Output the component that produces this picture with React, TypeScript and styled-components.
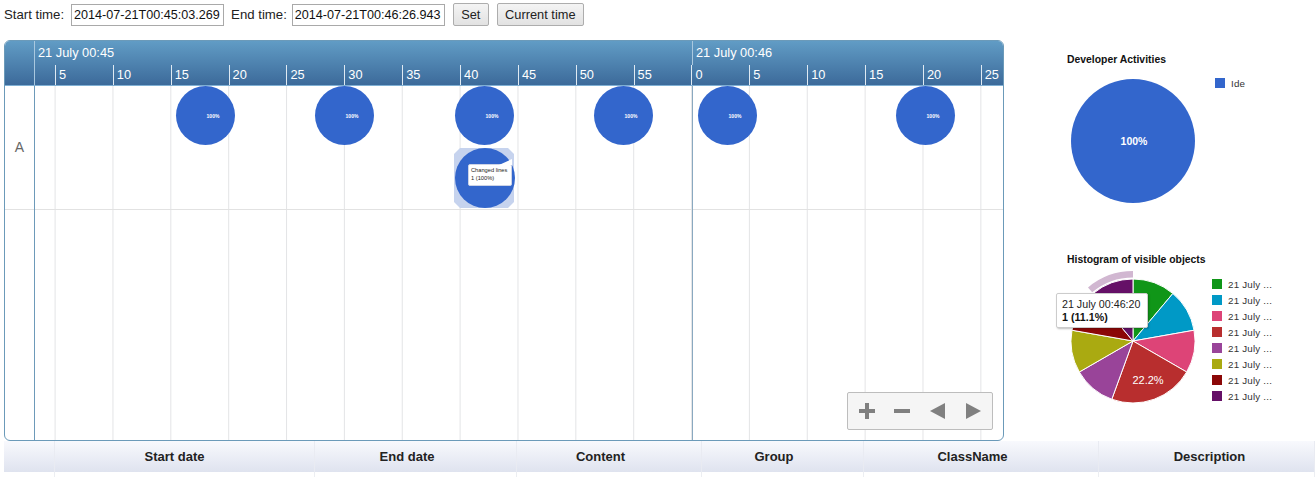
import React from "react";
import styled, { createGlobalStyle } from "styled-components";

const Global = createGlobalStyle`
  html, body { margin: 0; padding: 0; height: 477px; overflow: hidden; background: #fff; }
  body { font-family: "Liberation Sans", Arial, sans-serif; color: #111; }
`;

const Page = styled.div`
  width: 1315px;
  height: 477px;
  overflow: hidden;
`;

const Toolbar = styled.div`
  display: flex;
  align-items: flex-start;
  height: 40px;
  padding: 3px 0 0 4px;
  box-sizing: border-box;
  font-size: 13.2px;
`;
const FieldLabel = styled.label<{ $gap: number }>`
  line-height: 23px;
  margin-right: ${(p) => p.$gap}px;
  color: #222;
`;
const TimeInput = styled.input`
  width: 153px;
  height: 22px;
  margin: 1px 7px 0 0;
  padding: 0 0 0 2px;
  box-sizing: border-box;
  border: 1px solid #a9a9a9;
  font: 12.6px "Liberation Sans", Arial, sans-serif;
  color: #111;
`;
const ButtonGroup = styled.div`
  display: flex;
  gap: 8px;
  margin-left: 1px;
`;
const Button = styled.button<{ $w: number }>`
  width: ${(p) => p.$w}px;
  height: 23px;
  padding: 0;
  border: 1px solid #adadad;
  border-radius: 2px;
  background: linear-gradient(#f4f4f4, #e2e2e2);
  font: 12.8px "Liberation Sans", Arial, sans-serif;
  color: #222;
`;

const Main = styled.div`
  display: flex;
  height: 401px;
  padding-left: 4px;
`;

const Timeline = styled.div`
  width: 1000px;
  height: 401px;
  box-sizing: border-box;
  border: 1px solid #6b9ab9;
  border-radius: 6px;
  overflow: hidden;
  display: grid;
  grid-template-rows: 45px 1fr;
`;
const TimeHeader = styled.div`
  display: flex;
  flex-direction: column;
  background: linear-gradient(#619cc5, #3c6a9a);
  border-bottom: 1px solid #7fb0d4;
  box-sizing: border-box;
  color: #fff;
  font-size: 12.8px;
`;
const MajorRow = styled.div`
  display: flex;
  height: 25px;
  padding-left: 29px;
`;
const MajorCell = styled.div<{ $w: number }>`
  width: ${(p) => p.$w}px;
  flex: none;
  box-sizing: border-box;
  border-left: 1px solid #a9c8df;
  padding: 4px 0 0 3px;
`;
const MinorRow = styled.div`
  display: flex;
  height: 20px;
  padding-left: 29px;
`;
const MinorLead = styled.div`
  width: 21px;
  flex: none;
  border-left: 1px solid #a9c8df;
  box-sizing: border-box;
`;
const Tick = styled.div`
  width: 57.87px;
  flex: none;
  box-sizing: border-box;
  border-left: 1px solid #dfeaf3;
  padding: 2px 0 0 3px;
`;

const TimeBody = styled.div`
  display: grid;
  grid-template-columns: 30px 1fr;
  min-height: 0;
`;
const GroupColumn = styled.div`
  border-right: 1px solid #6d9ab9;
`;
const GroupLabel = styled.div`
  height: 124px;
  box-sizing: border-box;
  border-bottom: 1px solid #e2e2e2;
  padding-bottom: 2px;
  display: flex;
  align-items: center;
  justify-content: center;
  font-size: 14px;
  color: #666;
`;
const Canvas = styled.div`
  position: relative;
  background-position: 19.6px 0;
  background-size: 57.87px 100%;
  background-image: linear-gradient(to right, #e3e4e6 0, #e3e4e6 1px, transparent 1px);
`;
const RowBand = styled.div`
  height: 124px;
  box-sizing: border-box;
  border-bottom: 1px solid #e2e2e2;
`;
const MajorLine = styled.div`
  position: absolute;
  top: 0;
  bottom: 0;
  left: 657px;
  width: 1px;
  background: #8aa9c0;
`;
const Bubble = styled.div<{ $x: number; $y: number }>`
  position: absolute;
  left: ${(p) => p.$x}px;
  top: ${(p) => p.$y}px;
  width: 59px;
  height: 59px;
  padding-left: 15px;
  box-sizing: border-box;
  border-radius: 50%;
  background: #3366cc;
  color: #fff;
  font-size: 5px;
  font-weight: bold;
  display: flex;
  align-items: center;
  justify-content: center;
`;
const Selection = styled.div`
  position: absolute;
  left: 419px;
  top: 62px;
  width: 60px;
  height: 60px;
  background: #c6d3ee;
  clip-path: polygon(6px 0, 54px 0, 100% 6px, 100% 54px, 54px 100%, 6px 100%, 0 54px, 0 6px);
`;
const SelectedPie = styled.div`
  position: absolute;
  left: 420px;
  top: 62px;
  width: 60px;
  height: 60px;
  border-radius: 50%;
  background: #3366cc;
`;
const MiniTip = styled.div`
  position: absolute;
  left: 433px;
  top: 78px;
  width: 44px;
  height: 22px;
  box-sizing: border-box;
  padding: 2px 0 0 2px;
  background: #fff;
  border: 1px solid #ccd3e6;
  border-radius: 2px;
  font-size: 5.7px;
  line-height: 7.5px;
  color: #222;
  &::after {
    content: "";
    position: absolute;
    right: -1px;
    top: -6px;
    width: 13px;
    height: 6px;
    background: #fff;
    clip-path: polygon(0 100%, 100% 0, 100% 100%);
  }
`;

const Controls = styled.div`
  position: absolute;
  left: 812px;
  top: 306px;
  width: 146px;
  height: 38px;
  box-sizing: border-box;
  border: 1px solid #bdbdbd;
  border-radius: 2px;
  background: #f5f5f5;
  display: flex;
  align-items: center;
  justify-content: space-between;
  padding: 0 10px;
`;
const ControlIcon = styled.svg`
  width: 18px;
  height: 18px;
  fill: #808080;
  display: block;
`;

const Side = styled.div`
  flex: 1;
  display: flex;
  flex-direction: column;
`;
const ChartCard = styled.section`
  position: relative;
  height: 200px;
  padding-left: 63px;
  box-sizing: border-box;
`;
const ChartTitle = styled.h3<{ $top: number }>`
  margin: 0;
  padding-top: ${(p) => p.$top}px;
  height: 32px;
  box-sizing: border-box;
  font-size: 10.4px;
  line-height: 12px;
  font-weight: bold;
  color: #111;
`;
const ChartBody = styled.div`
  display: flex;
  margin-left: -3px;
`;
const PieSvg = styled.svg`
  width: 138px;
  height: 138px;
  flex: none;
  overflow: visible;
  display: block;
`;
const Legend = styled.ul<{ $left: number; $top: number }>`
  list-style: none;
  margin: ${(p) => p.$top}px 0 0 ${(p) => p.$left}px;
  padding: 0;
`;
const LegendRow = styled.li`
  display: flex;
  align-items: center;
  height: 16px;
  font-size: 9.8px;
  letter-spacing: 0.2px;
  color: #333;
`;
const Swatch = styled.span<{ $c: string }>`
  width: 10px;
  height: 10px;
  margin-right: 6px;
  background: ${(p) => p.$c};
`;
const ChartTip = styled.div`
  position: absolute;
  left: 52px;
  top: 53px;
  width: 92px;
  height: 35px;
  box-sizing: border-box;
  padding: 4px 0 0 5px;
  background: #fff;
  border: 1px solid #ccc;
  border-radius: 2px;
  box-shadow: 1px 1px 2px rgba(0, 0, 0, 0.25);
  font-size: 10.7px;
  line-height: 13px;
  color: #222;
  b { color: #111; font-weight: bold; }
`;

const DataTable = styled.div`
  margin-left: 4px;
`;
const TableRow = styled.div<{ $h: number }>`
  display: grid;
  grid-template-columns: 51px 260px 202px 185px 162px 235px 216px;
  height: ${(p) => p.$h}px;
`;
const HeadCell = styled.div<{ $shift: number }>`
  box-sizing: border-box;
  border-right: 1px solid #e9ebf2;
  background: linear-gradient(#f8f9fd, #dfe3ef);
  padding-right: ${(p) => Math.max(p.$shift, 0)}px;
  padding-left: ${(p) => Math.max(-p.$shift, 0)}px;
  display: flex;
  align-items: center;
  justify-content: center;
  font-size: 13px;
  font-weight: bold;
  color: #222;
`;
const BodyCell = styled.div`
  border-right: 1px solid #eceef2;
`;

const slices = [
  { c: "#109618", v: 1 },
  { c: "#0099c6", v: 1 },
  { c: "#dd4477", v: 1 },
  { c: "#b82e2e", v: 2 },
  { c: "#994499", v: 1 },
  { c: "#aaaa11", v: 1 },
  { c: "#8b0707", v: 1 },
  { c: "#651067", v: 1 },
];

const pt = (r: number, deg: number) => {
  const a = (deg * Math.PI) / 180;
  return `${(69 + r * Math.sin(a)).toFixed(2)} ${(69 - r * Math.cos(a)).toFixed(2)}`;
};
const slicePaths = (() => {
  let at = 0;
  return slices.map((s) => {
    const end = at + s.v * 40;
    const d = `M69 69 L${pt(62, at)} A62 62 0 0 1 ${pt(62, end)} Z`;
    at = end;
    return { ...s, d };
  });
})();

const ticks = [5, 10, 15, 20, 25, 30, 35, 40, 45, 50, 55, 0, 5, 10, 15, 20, 25];
const bubbles = [141, 280, 420, 559, 663, 861];
const columns = [
  { t: "", s: 0 },
  { t: "Start date", s: 20 },
  { t: "End date", s: 17 },
  { t: "Content", s: 17 },
  { t: "Group", s: 17 },
  { t: "ClassName", s: 17 },
  { t: "Description", s: -6 },
];

export default function App() {
  return (
    <Page>
      <Global />
      <Toolbar>
        <FieldLabel $gap={7}>Start time:</FieldLabel>
        <TimeInput defaultValue="2014-07-21T00:45:03.269" />
        <FieldLabel $gap={5}>End time:</FieldLabel>
        <TimeInput defaultValue="2014-07-21T00:46:26.943" />
        <ButtonGroup>
          <Button $w={36}>Set</Button>
          <Button $w={87}>Current time</Button>
        </ButtonGroup>
      </Toolbar>
      <Main>
        <Timeline>
          <TimeHeader>
            <MajorRow>
              <MajorCell $w={658}>21 July 00:45</MajorCell>
              <MajorCell $w={311}>21 July 00:46</MajorCell>
            </MajorRow>
            <MinorRow>
              <MinorLead />
              {ticks.map((t, i) => (
                <Tick key={i}>{t}</Tick>
              ))}
            </MinorRow>
          </TimeHeader>
          <TimeBody>
            <GroupColumn>
              <GroupLabel>A</GroupLabel>
            </GroupColumn>
            <Canvas>
              <RowBand />
              <MajorLine />
              {bubbles.map((x) => (
                <Bubble key={x} $x={x} $y={0}>
                  100%
                </Bubble>
              ))}
              <Selection />
              <SelectedPie />
              <MiniTip>
                Changed lines
                <br />1 (100%)
              </MiniTip>
              <Controls>
                <ControlIcon viewBox="0 0 18 18">
                  <path d="M7 1h4v6h6v4h-6v6H7v-6H1V7h6z" />
                </ControlIcon>
                <ControlIcon viewBox="0 0 18 18">
                  <path d="M1 7h16v4H1z" />
                </ControlIcon>
                <ControlIcon viewBox="0 0 18 18">
                  <path d="M1 9l15-8v16z" />
                </ControlIcon>
                <ControlIcon viewBox="0 0 18 18">
                  <path d="M17 9L2 1v16z" />
                </ControlIcon>
              </Controls>
            </Canvas>
          </TimeBody>
        </Timeline>
        <Side>
          <ChartCard>
            <ChartTitle $top={14}>Developer Activities</ChartTitle>
            <ChartBody>
              <PieSvg viewBox="0 0 138 138">
                <circle cx="69" cy="69" r="62" fill="#3366cc" />
                <text x="70" y="73" textAnchor="middle" fontSize="10.5" fontWeight="bold" fill="#fff" fontFamily="Liberation Sans">
                  100%
                </text>
              </PieSvg>
              <Legend $left={13} $top={3}>
                <LegendRow>
                  <Swatch $c="#3366cc" />
                  Ide
                </LegendRow>
              </Legend>
            </ChartBody>
          </ChartCard>
          <ChartCard>
            <ChartTitle $top={14}>Histogram of visible objects</ChartTitle>
            <ChartBody>
              <PieSvg viewBox="0 0 138 138">
                {slicePaths.map((s) => (
                  <path key={s.c} d={s.d} fill={s.c} stroke="#fff" strokeWidth="1" />
                ))}
                <path
                  d={`M${pt(70, 320)} A70 70 0 0 1 ${pt(70, 360)} L${pt(63.5, 360)} A63.5 63.5 0 0 0 ${pt(63.5, 320)} Z`}
                  fill="#d1b7d1"
                />
                <text x="84" y="112" textAnchor="middle" fontSize="11" fill="#fff" fontFamily="Liberation Sans">
                  22.2%
                </text>
              </PieSvg>
              <Legend $left={10} $top={4}>
                {slices.map((s) => (
                  <LegendRow key={s.c}>
                    <Swatch $c={s.c} />
                    21 July ...
                  </LegendRow>
                ))}
              </Legend>
            </ChartBody>
            <ChartTip>
              21 July 00:46:20
              <br />
              <b>1 (11.1%)</b>
            </ChartTip>
          </ChartCard>
        </Side>
      </Main>
      <DataTable>
        <TableRow $h={31}>
          {columns.map((c, i) => (
            <HeadCell key={i} $shift={c.s}>
              {c.t}
            </HeadCell>
          ))}
        </TableRow>
        <TableRow $h={5}>
          {columns.map((_, i) => (
            <BodyCell key={i} />
          ))}
        </TableRow>
      </DataTable>
    </Page>
  );
}
